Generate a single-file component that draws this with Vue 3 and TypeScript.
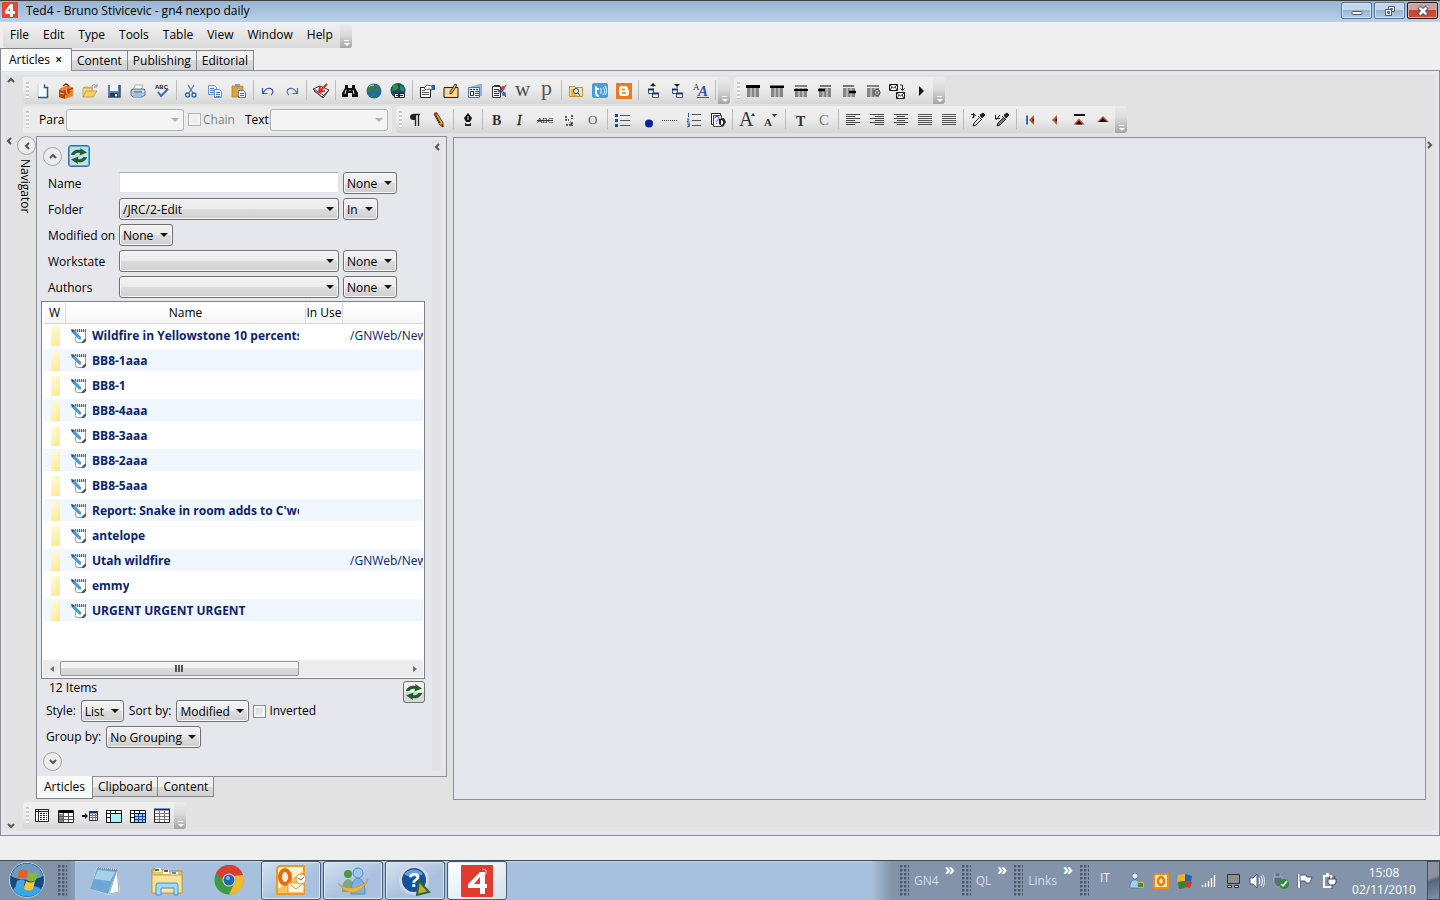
<script setup lang="ts">
import { ref } from 'vue'

interface Tool {
  icon?: string
  label?: string
  sep?: boolean
}

const t = (icon: string, label: string): Tool => ({ icon, label })
const sep: Tool = { sep: true }

const refreshArt =
  '<g fill="#1d5f2a"><path d="M0 7c1-4 5-6 9.500-5L9 0l7 4.500-7.500 3 .500-2.500C6.500 4 4 5.500 3.500 7z"/><path d="M16 9c-1 4-5 6-9.500 5L7 16 0 11.500l7.500-3L7 11c2.500 1 5-.500 5.500-2z"/></g>'

const tableBase =
  '<path d="M2 5h3.500v9H2zM6.500 5h3v9h-3zM10.500 5H14v9h-3.500z" fill="#858585"/>'

const icons: Record<string, string> = {
  newDoc:
    '<path d="M4 1.500h6.500l3 3v10H4z" fill="#f4f8ff"/><path d="M4 1.500v13" stroke="#b9cbe4"/><path d="M10.500 1.500v3h3v10H4" fill="none" stroke="#2f5884" stroke-width="1.500"/>',
  briefcase:
    '<path d="M1 6l9-4 5 3v8l-8 3-6-2z" fill="#e0852a"/><path d="M1 7l6 2v7l-6-2z" fill="#b5481a"/><path d="M7 9l8-4" stroke="#7b2e10"/><path d="M5 3l3-2 3 2" fill="none" stroke="#6c3211" stroke-width="1.500"/><path d="M5 8l6-3 1 5-6 3z" fill="#d23a20"/><path d="M8 6l1 5M2 10l4 1" stroke="#ffd166"/>',
  open:
    '<path d="M1 4l4-1 1 1 5-1v4H1z" fill="#e7b956"/><path d="M1 14V5h9v3z" fill="#f5d98a" stroke="#a9803a" stroke-width=".6"/><path d="M1 14l3-6h11l-4 6z" fill="#f8cf68" stroke="#a9803a" stroke-width=".6"/><path d="M10 3c2-2 3-2 4 0M15 1v3h-3" fill="none" stroke="#7d93b4"/>',
  save:
    '<path d="M2 2h12v12H2z" fill="#5c82ad"/><path d="M4 2h8v6H4z" fill="#eef4fb"/><path d="M4 10h8v4H4z" fill="#2c3c4d"/><path d="M9 11h2v3H9z" fill="#f5f5f5"/><path d="M14 2v12H2" fill="none" stroke="#2e4c70" stroke-width="1.500"/>',
  print:
    '<path d="M5 2h8l-2 5H3z" fill="#fff" stroke="#7f93ad" stroke-width=".7"/><path d="M1 7l3-1h10l1 1v5l-3 2H3l-2-2z" fill="#b7c6da" stroke="#4c6079" stroke-width=".8"/><path d="M4 9h8" stroke="#4f5f74"/><path d="M3 11h9l-1 3H4z" fill="#8fc0ee"/><path d="M12 8h2" stroke="#e9f7e3"/>',
  spell:
    '<text x="1" y="6" font-family="Liberation Sans,sans-serif" font-size="6" font-weight="700" fill="#222">ABC</text><path d="M4 9l3 4 7-7" fill="none" stroke="#2f71b6" stroke-width="2"/>',
  cut:
    '<path d="M5 2l5 8M11 2L6 10" stroke="#5f7d9f" stroke-width="1.300"/><circle cx="4.500" cy="12" r="2" fill="none" stroke="#2d64b3" stroke-width="1.300"/><circle cx="11" cy="12" r="2" fill="none" stroke="#2d64b3" stroke-width="1.300"/>',
  copy:
    '<path d="M1.500 2.500h6l2 2v7h-8z" fill="#e9f2ff" stroke="#6b95cd"/><path d="M3 5.500h4M3 7.500h4M3 9.500h4" stroke="#4279c4"/><path d="M7.500 6.500h5l2 2v6h-7z" fill="#e9f2ff" stroke="#6b95cd"/><path d="M9 9.500h4M9 11.500h4M9 13.500h4" stroke="#4279c4"/>',
  paste:
    '<path d="M1 3h11v11H1z" fill="#e5a23a" stroke="#a36a1d" stroke-width=".6"/><path d="M4 1h5v3H4z" fill="#8e9bab"/><path d="M7.500 7.500h5l2 2v5h-7z" fill="#eef5ff" stroke="#5c80b5"/><path d="M9 10.500h4M9 12.500h4" stroke="#4a6fae"/>',
  undo: '<path d="M2.500 10.500V5M2 10.500h5.500M3 10c2-4 6-6 9-3.500 1.500 1.500 1 4-1 5.500" fill="none" stroke="#3759a8" stroke-width="1.200"/>',
  redo: '<path d="M13.500 10.500V5M14 10.500H8.500M13 10c-2-4-6-6-9-3.500-1.500 1.500-1 4 1 5.500" fill="none" stroke="#4c70b8" stroke-width="1.200"/>',
  checkin:
    '<path d="M0 6l7-3 9 4-6 8z" fill="#fff" stroke="#222" stroke-width=".9"/><path d="M1 8l8 6 6-6M1 6l9 6" fill="none" stroke="#444"/><path d="M14 1L7 8M7 3l-1 6 6-1" stroke="#d92b20" stroke-width="2" fill="none"/>',
  find:
    '<path d="M3 2h3v3h4V2h3v3l3 5v4h-6v-4H6v4H0v-4l3-5z" fill="#111"/><path d="M3 11l1-4M12 11l-1-4M8 7v1" stroke="#e8e8e8"/>',
  globe:
    '<circle cx="8" cy="8" r="7.500" fill="#2566ad"/><path d="M2 4c3-3 6-2 6 0S5 6 5 8 3 9 1.500 8zM9 2l4 1 1.500 5-3 1-2-2zM6 10l4 1-2 4-3-2z" fill="#357f36"/><path d="M3 4c2-2 4-2 5-2" stroke="#c7e4f8" fill="none"/>',
  globeLink:
    '<circle cx="8" cy="7.500" r="7.500" fill="#174a73"/><path d="M3 2c4-2 6 0 5 3S3 7 2 8zM10 2l4 3v4l-4-2z" fill="#2f9438"/><path d="M4.500 10.500h4v4h-4zM9.500 10.500h5v4h-5z" fill="#eee" stroke="#222"/><path d="M6 12.500h7" stroke="#222"/>',
  props:
    '<path d="M1.500 4.500h10v10h-10z" fill="#fff" stroke="#222"/><path d="M3 7.500h3M3 9.500h7M3 11.500h7" stroke="#555"/><path d="M5 5l3-3 5 1v4l-3-1-3 1z" fill="#f3f3f3" stroke="#222" stroke-width=".7"/><path d="M13 2h3v5h-3z" fill="#3a5ea8"/>',
  editCard:
    '<path d="M1 4.500h14v10H1z" fill="#f6d38b" stroke="#222"/><path d="M3 7.500h4M3 9.500h3M3 12.500h9M12 9.500h2" stroke="#fff" stroke-dasharray="1 1"/><path d="M7 9l5-8 2 1-5 8-2 1z" fill="#f5a623" stroke="#222" stroke-width=".8"/>',
  news:
    '<path d="M3 4l9-3h3v12H3z" fill="#8eb5df"/><path d="M1.500 4.500h11v10h-11z" fill="#e8f1fb" stroke="#4473ad"/><path d="M3 6.500h8" stroke="#222" stroke-dasharray="2 1"/><path d="M3.500 8.500h3v4h-3z" fill="#fff" stroke="#222"/><path d="M8 8.500h4M8 10.500h4M8 12.500h4" stroke="#28508b"/>',
  docMix:
    '<path d="M1.500 3.500h8v11h-8z" fill="#fff" stroke="#333"/><path d="M3 6.500h5M3 8.500h3M3 10.500h5M3 12.500h5M3 2.500h5" stroke="#333"/><path d="M8 2l7 12M15 2l-6 9" stroke="#333"/><circle cx="12" cy="5" r="2" fill="#d33"/><circle cx="13" cy="11" r="2" fill="#4065c4"/><circle cx="8" cy="8" r="1.500" fill="#4065c4"/>',
  w: '<text x="0" y="13" font-family="Liberation Serif,serif" font-size="21" fill="#4d4d4d">w</text>',
  p: '<text x="2" y="12" font-family="Liberation Serif,serif" font-size="22" fill="#555">p</text>',
  folderFind:
    '<path d="M1.500 3.500h5l1 1h7v9h-13z" fill="#fbe3a7" stroke="#c09036"/><path d="M3 6h8v7H3z" fill="#f5b32b"/><path d="M9 7h5v6H9z" fill="#dbe9f7"/><circle cx="8" cy="8" r="2.500" fill="#eaf5ff" stroke="#345"/><path d="M10 10l2 3" stroke="#345"/>',
  twit:
    '<rect width="16" height="15" rx="2" fill="#44a0dc"/><path d="M4 3v7c0 2 1 3 3 3M4 6h3" fill="none" stroke="#fff" stroke-width="2"/><path d="M9 5v6M11 4c2 2 2 5 0 8M13 3c2 3 2 6 0 9" stroke="#e9f6ff" fill="none"/>',
  blogger:
    '<rect width="16" height="16" fill="#ee7a1d"/><path d="M6 3h3c2 0 3 1 3 3 0 1 1 1 1 2v2c0 2-1 3-3 3H6c-2 0-3-1-3-3V6c0-2 1-3 3-3z" fill="#fff"/><path d="M6 6.500h3M6 10h4" stroke="#ee7a1d" stroke-width="1.500"/>',
  winUp:
    '<path d="M5 3l3-3 3 3z" fill="#111"/><path d="M8 3v4" stroke="#444" stroke-dasharray="1 1"/><path d="M3.500 6.500h5v4h-5zM7.500 10.500h6v4h-6z" fill="#fff" stroke="#35579d"/><path d="M3 6.500h6M7 10.500h7" stroke="#1d3470" stroke-width="2"/>',
  winDown:
    '<path d="M5 1h6L8 4z" fill="#111"/><path d="M8 4v3" stroke="#444" stroke-dasharray="1 1"/><path d="M3.500 6.500h5v4h-5zM7.500 10.500h6v4h-6z" fill="#fff" stroke="#35579d"/><path d="M3 6.500h6M7 10.500h7" stroke="#1d3470" stroke-width="2"/>',
  aA: '<text x="0" y="7" font-family="Liberation Serif,serif" font-size="9" fill="#333">A</text><text x="5" y="13" font-family="Liberation Serif,serif" font-size="15" font-style="italic" font-weight="700" fill="#35579d">A</text><path d="M4 14.500h12" stroke="#35579d"/>',
  tb1: tableBase + '<path d="M1 2h14v3H1z" fill="#000"/>',
  tb2: tableBase + '<path d="M1 3h14" stroke="#777" stroke-width="2"/><path d="M1 4h14" stroke="#000" stroke-width="2"/>',
  tb3: tableBase + '<path d="M2 3h12" stroke="#858585" stroke-width="2"/><path d="M1 7h14" stroke="#000" stroke-width="2"/>',
  tb4: tableBase + '<path d="M3 3h11" stroke="#777" stroke-width="2"/><path d="M1 7h7" stroke="#000" stroke-width="2.500"/>',
  tb5: tableBase + '<path d="M2 3h11" stroke="#777" stroke-width="2"/><path d="M8 9h7" stroke="#000" stroke-width="2.500"/>',
  tb6: tableBase + '<path d="M2 3h12" stroke="#858585" stroke-width="2"/><circle cx="12" cy="9.500" r="3" fill="#eee" stroke="#333"/><path d="M10 7.500l4 4m0-4l-4 4" stroke="#333"/>',
  mail:
    '<path d="M.500 1.500h8v6h-8zM7.500 9.500h8v6h-8z" fill="#fff" stroke="#111"/><path d="M1 2l3.500 3L8 2M1 7l2-3M8 7L6 4M8 10l3.500 3 3.500-3M8 15l2-3M15 15l-2-3M11 2h2.500v5M11.500 5.500l2 2 2-2" fill="none" stroke="#111" stroke-width=".9"/>',
  play: '<path d="M6 3l5 5-5 5z" fill="#111"/>',
  pilcrow: '<path d="M6 2.500h7M8.500 2v12M11.500 2v12" stroke="#222" stroke-width="1.300"/><path d="M8 2H6c-4 0-4 6 0 6h2z" fill="#222"/>',
  pencil: '<path d="M3 2l3-1 6 10v4l-3-2z" fill="#eea12d" stroke="#5a3a10"/><path d="M4 2l5 9M11 12l1 3" stroke="#222"/><path d="M3 2l3-1" stroke="#a03a2a" stroke-width="2"/>',
  pen: '<path d="M8 1l4 5-2 4H6L4 6z" fill="#111"/><path d="M8 4v4" stroke="#eee"/><path d="M5 11h6v3H5z" fill="#222"/><path d="M6 11.500h4" stroke="#eee"/>',
  bold: '<text x="3" y="13" font-family="Liberation Serif,serif" font-size="14" font-weight="700" fill="#333">B</text>',
  italic: '<text x="4" y="13" font-family="Liberation Serif,serif" font-size="14" font-style="italic" fill="#222" stroke="#222" stroke-width=".3">I</text>',
  strike: '<text x="0" y="11" font-family="Liberation Sans,sans-serif" font-size="8" fill="#333">ABC</text><path d="M0 8.500h16" stroke="#333"/>',
  hyph: '<path d="M5 4v4h3M11 3v4M5 13h6l-2-3M11 10v4" fill="none" stroke="#333" stroke-width="1.500" stroke-dasharray="2 1"/>',
  circ: '<text x="3" y="12" font-family="Liberation Serif,serif" font-size="13" fill="#666">O</text>',
  bullets: '<path d="M1 2h3v3H1zM1 7h3v3H1zM1 12h3v3H1z" fill="#2441a0"/><path d="M6 3.500h10M6 8.500h10M6 13.500h10" stroke="#555"/>',
  dot: '<circle cx="11" cy="11.500" r="4" fill="#0d2496"/>',
  dotted: '<path d="M0 8.500h16" stroke="#444" stroke-dasharray="1 1"/>',
  numbers: '<path d="M2.500 1v4M1 7h2l-2 3h3M1 12h3l-2 1 2 1-3 1" stroke="#35579d" fill="none"/><path d="M6 2.500h9M6 8.500h9M6 13.500h9" stroke="#555"/>',
  help: '<path d="M1.500 1.500h9v11h-9z" fill="#fff" stroke="#222"/><path d="M3.500 3.500h8v11h-8z" fill="#eef3fa" stroke="#444"/><text x="4" y="12" font-family="Liberation Sans,sans-serif" font-size="10" fill="#35579d">?</text><path d="M9 7l5-1 2 4-3 5-4-3z" fill="#222"/><path d="M11 8l2 1v3l-2 1z" fill="#fff"/>',
  bigA: '<text x="0" y="14" font-family="Liberation Serif,serif" font-size="20" fill="#333">A</text><path d="M12 4l2-3 2 3z" fill="#333"/>',
  smallA: '<text x="1" y="14" font-family="Liberation Serif,serif" font-size="11" font-weight="700" fill="#333">A</text><path d="M9 2h5l-2.500 3z" fill="#333"/>',
  typeT: '<path d="M2 3.500h6M3 5.500h6" stroke="#d3d3d3"/><text x="4" y="14" font-family="Liberation Serif,serif" font-size="14" font-weight="700" fill="#333">T</text>',
  typeC: '<text x="3" y="13" font-family="Liberation Serif,serif" font-size="15" fill="#7a7a7a">C</text>',
  alignL: '<path d="M1 2.500h14M1 4.500h9M1 6.500h14M1 8.500h9M1 10.500h14M1 12.500h9" stroke="#444"/>',
  alignR: '<path d="M1 2.500h14M6 4.500h9M1 6.500h14M6 8.500h9M1 10.500h14M6 12.500h9" stroke="#444"/>',
  alignC: '<path d="M1 2.500h14M4 4.500h8M1 6.500h14M4 8.500h8M1 10.500h14M4 12.500h8" stroke="#444"/>',
  alignJ: '<path d="M1 2.500h14M1 4.500h14M1 6.500h14M1 8.500h14M1 10.500h14M1 12.500h14" stroke="#555"/>',
  dropper1: '<path d="M1 2.500h4M3.500 1v5M6 3L2 6" stroke="#222"/><path d="M10 3l3-2 2 2-3 3z" fill="#222" stroke="#222"/><path d="M8 4l4 4M10 5l-6 6-1 3 3-1 6-6" fill="none" stroke="#222"/>',
  dropper2: '<path d="M1 6.500h5M2 8l4-5M1.500 3v4" stroke="#222"/><path d="M10 3l3-2 2 2-3 3z" fill="#222" stroke="#222"/><path d="M8 4l4 4M10 5l-6 6-1 3 3-1 6-6" fill="#777" stroke="#222"/>',
  first: '<path d="M4 3.500v9" stroke="#3b66b0" stroke-width="2"/><path d="M11 3v10L6 8z" fill="#c4532f"/><path d="M11 6v4L9 8z" fill="#111"/>',
  prev: '<path d="M10 3v10L5 8z" fill="#c4532f"/><path d="M10 6v4L8 8z" fill="#111"/>',
  top: '<path d="M3 3h11" stroke="#111" stroke-width="2"/><path d="M2.500 12.500L8 6.500l5.500 6z" fill="#c4532f"/><path d="M4.500 12.500L8 8.500l3.500 4z" fill="#111"/>',
  up: '<path d="M2 10l6-6 6 6z" fill="#c4532f"/><path d="M4 10l4-4 4 4z" fill="#111"/>',
  gridA: '<path d="M1.500 1.500h13v12h-13z" fill="#fff" stroke="#222"/><path d="M1.500 3.500h13M4.500 1.500v12" stroke="#222"/><path d="M6 5.500h7M6 7.500h7M6 9.500h7M6 11.500h7" stroke="#222" stroke-dasharray="2 1"/>',
  gridB: '<path d="M.500 2.500h15v12H.500z" fill="#fff" stroke="#222"/><path d="M1 2h14v3H1z" fill="#000"/><path d="M1 6h4v8H1z" fill="#888"/><path d="M5.500 5v9M10.500 5v9M1 8.500h14M1 11.500h14" stroke="#555"/>',
  gridC: '<path d="M0 8h5" stroke="#111" stroke-width="2"/><path d="M3 5l3 3-3 3z" fill="#111"/><path d="M7.500 3.500h8v9h-8z" fill="#fff" stroke="#1d2f7a"/><path d="M7 4.500h9" stroke="#1d2f7a" stroke-width="2"/><path d="M8 7.500h7M8 9.500h7M10.500 6v6M13.500 6v6" stroke="#777"/>',
  gridD: '<path d="M.500 2.500h15v12H.500z" fill="#a8f1f5" stroke="#111"/><path d="M1 3h14v2H1zM1 6h3v8H1z" fill="#fff"/><path d="M.500 5.500h15M4.500 2.500v12M9.500 3v2M1 9.500h3" stroke="#111"/>',
  gridE: '<path d="M.500 2.500h15v12H.500z" fill="#7edff0" stroke="#111"/><path d="M1 3h14v2H1zM1 6h3v8H1z" fill="#fff"/><path d="M.500 5.500h15M4.500 2.500v12M9.500 3v2M1 9.500h3" stroke="#111"/><path d="M5 8.500h10M5 11.500h10M8.500 6v8M12.500 6v8" stroke="#1d3fae"/>',
  gridF: '<path d="M.500 1.500h15v13H.500z" fill="#fff" stroke="#222"/><path d="M0 1.500h16" stroke="#1d2f7a" stroke-width="2"/><path d="M1 5.500h14M1 8.500h14M1 11.500h14M5.500 3v11M10.500 3v11" stroke="#777"/>',
}

const mainBar: Tool[] = [
  t('newDoc', 'New'), t('briefcase', 'Case'), t('open', 'Open'), t('save', 'Save'), t('print', 'Print'), t('spell', 'Spelling'), sep,
  t('cut', 'Cut'), t('copy', 'Copy'), t('paste', 'Paste'), sep, t('undo', 'Undo'), t('redo', 'Redo'), sep, t('checkin', 'Check in'), sep,
  t('find', 'Find'), t('globe', 'Web'), t('globeLink', 'Web link'), sep,
  t('props', 'Properties'), t('editCard', 'Edit card'), t('news', 'News'), t('docMix', 'Structure'), t('w', 'Words'), t('p', 'Paragraphs'), sep,
  t('folderFind', 'Browse'), t('twit', 'Twitter'), t('blogger', 'Blogger'), sep,
  t('winUp', 'Raise'), t('winDown', 'Lower'), t('aA', 'Case change'), sep,
]
const columnBar: Tool[] = [
  t('tb1', 'Column 1'), t('tb2', 'Column 2'), t('tb3', 'Column 3'), t('tb4', 'Column 4'), t('tb5', 'Column 5'), t('tb6', 'Remove column'), t('mail', 'Swap'), t('play', 'Play'),
]
const formatBar: Tool[] = [
  t('pilcrow', 'Show marks'), t('pencil', 'Pencil'), sep, t('pen', 'Pen'), sep,
  t('bold', 'Bold'), t('italic', 'Italic'), t('strike', 'Strike'), t('hyph', 'Hyphen'), t('circ', 'Outline'), sep,
  t('bullets', 'Bullets'), t('dot', 'Dot'), t('dotted', 'Leader'), t('numbers', 'Numbering'), t('help', 'Symbol'), sep,
  t('bigA', 'Grow'), t('smallA', 'Shrink'), sep, t('typeT', 'Type'), t('typeC', 'Character'), sep,
  t('alignL', 'Left'), t('alignR', 'Right'), t('alignC', 'Centre'), t('alignJ', 'Justify'), t('alignJ', 'Force justify'), sep,
  t('dropper1', 'Pick style'), t('dropper2', 'Apply style'), sep,
  t('first', 'First'), t('prev', 'Previous'), t('top', 'Top'), t('up', 'Up'),
]
const gridBar: Tool[] = [
  t('gridA', 'Grid'), t('gridB', 'Table'), t('gridC', 'Insert table'), t('gridD', 'Select body'), t('gridE', 'Select cells'), t('gridF', 'Table lines'),
]

const menus = ['File', 'Edit', 'Type', 'Tools', 'Table', 'View', 'Window', 'Help']
const pages = ['Content', 'Publishing', 'Editorial']

const filters = [
  { id: 'name', label: 'Name', kind: 'text', value: '', op: 'None' },
  { id: 'folder', label: 'Folder', kind: 'select', value: '/JRC/2-Edit', op: 'In' },
  { id: 'modified', label: 'Modified on', kind: 'none', value: '', op: 'None' },
  { id: 'workstate', label: 'Workstate', kind: 'select', value: '', op: 'None' },
  { id: 'authors', label: 'Authors', kind: 'select', value: '', op: 'None' },
]

const rows = [
  { name: 'Wildfire in Yellowstone 10 percents c', path: '/GNWeb/New' },
  { name: 'BB8-1aaa', path: '' },
  { name: 'BB8-1', path: '' },
  { name: 'BB8-4aaa', path: '' },
  { name: 'BB8-3aaa', path: '' },
  { name: 'BB8-2aaa', path: '' },
  { name: 'BB8-5aaa', path: '' },
  { name: "Report: Snake in room adds to C'wea", path: '' },
  { name: 'antelope', path: '' },
  { name: 'Utah wildfire', path: '/GNWeb/New' },
  { name: 'emmy', path: '' },
  { name: 'URGENT URGENT URGENT', path: '' },
]

const search = ref('')
const inverted = ref(false)

const apps = [
  { label: 'Notepad', state: '', art: '<path d="M8 2l20 2 3 23-11 3L1 24z" fill="#dcecf7"/><path d="M8 3l20 2-9 24L1 24z" fill="#6ea8d2"/><path d="M9 5l17 2-5 9L5 14z" fill="#a9d0ea"/><path d="M28 5l2 22-10 2z" fill="#f6f8fa" stroke="#8c99a8" stroke-width=".7"/><path d="M9 3l19 2" stroke="#7b8793" stroke-width="2" stroke-dasharray="1 1"/>' },
  { label: 'Explorer', state: '', art: '<path d="M1 4h10l1 2h19v22H1z" fill="#e7c56a" stroke="#b48f3c"/><path d="M4 3h6v4H4zM12 5h6v4h-6zM20 7h7v3h-7z" fill="#fff"/><path d="M4 5h4" stroke="#2b8a3e" stroke-width="2"/><path d="M13 6h4" stroke="#c33" stroke-width="2"/><path d="M21 8h4" stroke="#28a0d8" stroke-width="2"/><path d="M1 10h30v18H1z" fill="#f9e39a" stroke="#c6a24a"/><path d="M5 30V20q0-2 2-2h18q2 0 2 2v10h-4v-7H10v7z" fill="#a5d8f3" stroke="#4a94c6"/>' },
  { label: 'Chrome', state: '', art: '<circle cx="16" cy="15" r="14.500" fill="#3f9a48"/><path d="M3 8A14.500 14.500 0 0 1 30 10H16a6 6 0 0 0-6 5z" fill="#d93e31"/><path d="M30 10a14.500 14.500 0 0 1-14 19.500L21 19a6 6 0 0 0 0-8z" fill="#f2b92a"/><circle cx="16" cy="15" r="6.500" fill="#ddd"/><circle cx="16" cy="15" r="5.500" fill="#2468ac"/><circle cx="15" cy="13" r="2" fill="#7eb8e6"/>' },
  { label: 'Outlook', state: 'open', art: '<path d="M2 5q0-4 4-4h23v28H2z" fill="#fff3cf" stroke="#ee9a1a" stroke-width="2"/><path d="M3 24L28 6v22H3z" fill="#f7c55c"/><ellipse cx="10" cy="12" rx="5" ry="7" fill="none" stroke="#e56b18" stroke-width="4"/><path d="M13 18h16v10H13z" fill="#fff6df" stroke="#e39e35"/><path d="M13 18l8 6 8-6" fill="none" stroke="#e39e35"/><circle cx="26" cy="14" r="5" fill="#fffaf0" stroke="#de9430"/><path d="M23 13l3 2 3-3" fill="none" stroke="#777"/>' },
  { label: 'Messenger', state: 'open', art: '<circle cx="11" cy="9" r="4" fill="#4f9444"/><path d="M5 27c-1-17 13-17 13 0z" fill="#82a883"/><circle cx="21" cy="8" r="5" fill="#9cc8ee" stroke="#5a8dc0"/><path d="M14 29c-1-21 15-21 14 0z" fill="#80b1e0" stroke="#5a8dc0"/><path d="M1 18c7 8 24 6 30-4-6 15-20 19-30 4z" fill="#e7b93d" stroke="#c28e20" stroke-width=".6"/>' },
  { label: 'Help', state: 'open', art: '<circle cx="15" cy="15" r="13.500" fill="#174f9c" stroke="#cfd8e2" stroke-width="3"/><path d="M5 9c5-6 15-6 19 0-4 3-15 4-19 0z" fill="#649fd8"/><text x="9" y="22" font-family="Liberation Sans,sans-serif" font-size="20" font-weight="700" fill="#fff">?</text><path d="M18 30l2-14 10 11z" fill="#c9a83c" stroke="#276f30" stroke-width="2"/>' },
  { label: 'Ted4', state: 'open active', art: '<rect width="32" height="32" rx="1" fill="#e03c2d"/><path d="M19 7L7 19v4h12v6h5v-6h2v-4h-2V7zM19 19h-6l6-7z" fill="#fff" fill-rule="evenodd"/><path d="M21 4l4 1v4l-3 2" fill="none" stroke="#f4c9b9"/>' },
]

const tray = [
  { label: 'User', art: '<circle cx="6" cy="3" r="3" fill="#d8ecfa" stroke="#3a78a8" stroke-width=".7"/><path d="M1 15c-1-11 11-11 10 0z" fill="#a5cdea" stroke="#3a78a8" stroke-width=".7"/><path d="M8.500 9.500h6v5h-6z" fill="#4c8b31" stroke="#d9b63a"/>' },
  { label: 'Outlook', art: '<path d="M1 1h14v14H1z" fill="#ffe7b3" stroke="#ee8c14" stroke-width="2"/><ellipse cx="8" cy="8" rx="3" ry="4" fill="none" stroke="#e8790c" stroke-width="2.500"/>' },
  { label: 'Antivirus', art: '<path d="M1 2l7-1v7L0 9z" fill="#e9b52a"/><path d="M8 1l7 2-1 6-6-1z" fill="#2b5daf"/><path d="M1 9l7-1v7l-6 1z" fill="#2e8536"/><path d="M8 8l7 1-2 6-5-1z" fill="#d13a2a"/>' },
  { label: 'Network', art: '<path d="M1.500 14v-2M4.500 14v-4M7.500 14V8M10.500 14V5M13.500 14V2" stroke="#3c4b60" stroke-width="3"/><path d="M1.500 14v-2M4.500 14v-4M7.500 14V8M10.500 14V5M13.500 14V2" stroke="#fff" stroke-width="2"/>' },
  { label: 'Display', art: '<path d="M2.500 1.500h12v9h-12z" fill="#8f8f8f" stroke="#333"/><path d="M2.500 12.500h4v2h-4zM9.500 12.500h4v2h-4z" fill="#ddd" stroke="#333"/>' },
  { label: 'Volume', art: '<path d="M1 5h3l4-4v14l-4-4H1z" fill="#fff" stroke="#3c4a5d" stroke-width=".9"/><path d="M10 5c1 2 1 4 0 6M12 3c2 3 2 7 0 10" fill="none" stroke="#fff"/><path d="M14 2c2 4 2 8 0 12" fill="none" stroke="#dfe5ec"/>' },
  { label: 'Safely remove', art: '<path d="M2 0h5v4H2zM1 4h8v6l-3 4H4l-3-4z" fill="#626d79" stroke="#bcc6d1" stroke-width=".6"/><circle cx="11" cy="11" r="5" fill="#2f8a42"/><path d="M8 11l2 2 4-5" fill="none" stroke="#fff" stroke-width="1.500"/>' },
  { label: 'Action centre', art: '<path d="M2 1v14" stroke="#3c4a5d" stroke-width="3"/><path d="M2 1v14" stroke="#fff" stroke-width="2"/><path d="M3 2h6l1 2h5l-2 6H9L8 8H3z" fill="#fff" stroke="#3c4a5d" stroke-width=".9"/>' },
  { label: 'Power', art: '<path d="M3 3h7v11H3z" fill="none" stroke="#fff" stroke-width="2"/><path d="M5 0h3v2H5z" fill="#fff"/><path d="M8.500 3v3M13.500 3v3M7 6h8v4l-2 2H9l-2-2zM11 12v4" fill="#fff" stroke="#3c4a5d"/>' },
]

const links = ['GN4', 'QL', 'Links']
</script>

<template>
  <div class="window">
    <header class="titlebar">
      <svg class="logo" viewBox="0 0 16 16"><rect width="16" height="16" rx="1" fill="#e4472b" /><path d="M8 2L3 9v3h5v3h3v-3h2V9h-2V2zM8 9H6l2-3z" fill="#fff" fill-rule="evenodd" /></svg>
      <h1 class="title">Ted4 - Bruno Stivicevic - gn4 nexpo daily</h1>
      <button class="wbtn" aria-label="Minimize"><svg viewBox="0 0 14 12"><rect x="2" y="6.500" width="10" height="3" rx="1" fill="#fff" stroke="#4b5a6d" /></svg></button>
      <button class="wbtn" aria-label="Restore"><svg viewBox="0 0 14 12"><path d="M5.500 1.500h6v5h-6zM7.500 3.500v1h2v-1z" fill="#fff" stroke="#4b5a6d" fill-rule="evenodd" /><path d="M2.500 4.500h6v6h-6zM4.500 6.500v2h2v-2z" fill="#fff" stroke="#4b5a6d" fill-rule="evenodd" /></svg></button>
      <button class="wbtn close" aria-label="Close"><svg viewBox="0 0 14 12"><path d="M3 2l8 8M11 2l-8 8" stroke="#454a5c" stroke-width="4.500" /><path d="M3.500 2.500l7 7M10.500 2.500l-7 7" stroke="#fff" stroke-width="2.500" /></svg></button>
    </header>

    <nav class="menubar">
      <div class="menus">
        <button v-for="m in menus" :key="m" class="menu">{{ m }}</button>
        <span class="overflow"></span>
      </div>
    </nav>

    <div class="tabs">
      <button class="tab active">Articles <span class="x">×</span></button>
      <button v-for="p in pages" :key="p" class="tab">{{ p }}</button>
    </div>

    <main class="frame">
      <div class="inner">
        <div class="gutter">
          <button class="chev g-up" aria-label="Hide toolbars"><svg viewBox="0 0 8 8"><path d="M1 6l3-3 3 3" /></svg></button>
          <button class="chev g-left" aria-label="Hide navigator"><svg viewBox="0 0 8 8"><path d="M6 1L3 4l3 3" /></svg></button>
          <button class="chev g-down" aria-label="Hide table bar"><svg viewBox="0 0 8 8"><path d="M1 2l3 3 3-3" /></svg></button>
        </div>

        <div class="center">
          <div class="barrow">
            <div class="toolbar">
              <span class="grip"></span>
              <template v-for="(b, i) in mainBar" :key="i">
                <span v-if="b.sep" class="sep"></span>
                <button v-else class="tool" :aria-label="b.label"><svg viewBox="0 0 16 16" v-html="icons[b.icon!]"></svg></button>
              </template>
              <span class="overflow"></span>
            </div>
            <div class="toolbar">
              <span class="grip"></span>
              <button v-for="b in columnBar" :key="b.label" class="tool" :aria-label="b.label"><svg viewBox="0 0 16 16" v-html="icons[b.icon!]"></svg></button>
              <span class="overflow"></span>
            </div>
          </div>

          <div class="barrow">
            <div class="toolbar styles">
              <span class="grip"></span>
              <label class="slabel" for="para">Para</label>
              <span class="combo off"><select id="para" disabled><option></option></select></span>
              <label class="check dim"><input type="checkbox" disabled />Chain</label>
              <label class="slabel textlabel" for="text">Text</label>
              <span class="combo off"><select id="text" disabled><option></option></select></span>
            </div>
            <div class="toolbar">
              <span class="grip"></span>
              <template v-for="(b, i) in formatBar" :key="i">
                <span v-if="b.sep" class="sep"></span>
                <button v-else class="tool" :aria-label="b.label"><svg viewBox="0 0 16 16" v-html="icons[b.icon!]"></svg></button>
              </template>
              <span class="overflow"></span>
            </div>
          </div>

          <div class="body">
            <div class="navstrip">
              <button class="round" aria-label="Collapse navigator"><svg viewBox="0 0 8 8"><path d="M6 1L3 4l3 3" /></svg></button>
              <span class="vtext">Navigator</span>
            </div>

            <div class="side">
              <section class="panel">
                <div class="content">
                  <div class="head">
                    <button class="round" aria-label="Collapse filters"><svg viewBox="0 0 8 8"><path d="M1 6l3-3 3 3" /></svg></button>
                    <button class="refresh focus" aria-label="Refresh"><svg viewBox="0 0 16 16" v-html="refreshArt"></svg></button>
                  </div>

                  <form class="filters" @submit.prevent>
                    <div v-for="f in filters" :key="f.id" class="filter">
                      <label class="flabel" :for="f.id">{{ f.label }}</label>
                      <input v-if="f.kind === 'text'" :id="f.id" v-model="search" class="field" type="text" />
                      <span v-else-if="f.kind === 'select'" class="combo wide"><select :id="f.id"><option>{{ f.value }}</option></select></span>
                      <span class="combo" :class="f.op === 'In' ? 'tiny' : 'op'"><select :id="f.kind === 'none' ? f.id : f.id + '-op'" :aria-label="f.label + ' condition'"><option>{{ f.op }}</option></select></span>
                    </div>
                  </form>

                  <div class="list">
                    <div class="viewport">
                      <table>
                        <colgroup><col class="c-w" /><col class="c-name" /><col class="c-use" /><col class="c-path" /></colgroup>
                        <thead><tr><th>W</th><th>Name</th><th>In Use</th><th></th></tr></thead>
                        <tbody>
                          <tr v-for="r in rows" :key="r.name">
                            <td><span class="swatch"></span></td>
                            <td>
                              <span class="item">
                                <svg class="doc" viewBox="0 0 16 16"><path d="M4.500 3v9.500q0 2 2 2h4l4-4V3z" fill="#fff" stroke="#9a9a9a" /><path d="M4 2.500h11" stroke="#666" stroke-width="3" stroke-dasharray="1 1" /><path d="M10 15l5-5v3l-2 2z" fill="#555" /><path d="M0 2l4 1 7 7v3l-3-1-7-7z" fill="#fff" /><path d="M2 3l2 0 6 6v2.500H8L2 5.500z" fill="#4f97d0" /><path d="M0 1l4 1-3 3z" fill="#1e4e8c" /></svg>
                                <span class="name">{{ r.name }}</span>
                              </span>
                            </td>
                            <td></td>
                            <td class="path">{{ r.path }}</td>
                          </tr>
                        </tbody>
                      </table>
                    </div>
                    <div class="scroll">
                      <button class="arrow" aria-label="Scroll left"><svg viewBox="0 0 6 8"><path d="M5 1v6L1 4z" /></svg></button>
                      <span class="track"><span class="thumb"><i></i><i></i><i></i></span></span>
                      <button class="arrow" aria-label="Scroll right"><svg viewBox="0 0 6 8"><path d="M1 1v6l4-3z" /></svg></button>
                    </div>
                  </div>

                  <div class="foot">
                    <div class="footmain">
                      <p class="count">12 Items</p>
                      <div class="opts">
                        <label for="style">Style:</label>
                        <span class="combo w-list"><select id="style"><option>List</option></select></span>
                        <label for="sort">Sort by:</label>
                        <span class="combo w-mod"><select id="sort"><option>Modified</option></select></span>
                        <label class="check"><input v-model="inverted" type="checkbox" />Inverted</label>
                      </div>
                      <div class="opts">
                        <label for="group">Group by:</label>
                        <span class="combo w-group"><select id="group"><option>No Grouping</option></select></span>
                      </div>
                      <button class="round" aria-label="Expand options"><svg viewBox="0 0 8 8"><path d="M1 2l3 3 3-3" /></svg></button>
                    </div>
                    <button class="refresh" aria-label="Refresh list"><svg viewBox="0 0 16 16" v-html="refreshArt"></svg></button>
                  </div>
                </div>
                <div class="rail">
                  <button class="chev" aria-label="Collapse panel"><svg viewBox="0 0 8 8"><path d="M6 1L3 4l3 3" /></svg></button>
                </div>
              </section>
              <div class="ptabs">
                <button class="tab active">Articles</button>
                <button class="tab">Clipboard</button>
                <button class="tab">Content</button>
              </div>
            </div>

            <section class="canvas"></section>
            <div class="rgutter"><button class="chev" aria-label="Show right panel"><svg viewBox="0 0 8 8"><path d="M2 1l3 3-3 3" /></svg></button></div>
          </div>

          <div class="barrow last">
            <div class="toolbar">
              <span class="grip"></span>
              <button v-for="b in gridBar" :key="b.label" class="tool" :aria-label="b.label"><svg viewBox="0 0 16 16" v-html="icons[b.icon!]"></svg></button>
              <span class="overflow"></span>
            </div>
          </div>
        </div>
      </div>
    </main>

    <div class="status"></div>

    <footer class="taskbar">
      <div class="startzone">
        <button class="orb" aria-label="Start">
          <svg viewBox="0 0 38 38"><circle cx="19" cy="19" r="17.500" fill="#164a80" stroke="#b9d2ea" /><path d="M3 15a16.500 16.500 0 0 1 32 0c-8 5-24 5-32 0z" fill="#7398bd" /><path d="M5 28c7-5 21-5 28 0-6 10-22 10-28 0z" fill="#35a9e4" /><path d="M11 10c3-2 6-2 9 0l-2 8c-3-2-6-2-9 0z" fill="#ea5f23" /><path d="M21 11c3 2 6 2 9 0l-2 8c-3 2-6 2-9 0z" fill="#86b93a" /><path d="M9 20c3-2 5-2 8 0l-2 8c-3-2-5-2-8 0z" fill="#4ba3e0" /><path d="M18 20c3 2 6 2 9 0l-2 8c-3 2-6 2-9 0z" fill="#f8c535" /></svg>
        </button>
        <span class="dots"></span>
      </div>
      <div class="apps">
        <button v-for="a in apps" :key="a.label" class="app" :class="a.state" :aria-label="a.label"><svg viewBox="0 0 32 32" v-html="a.art"></svg></button>
      </div>
      <div class="trayzone">
        <template v-for="l in links" :key="l">
          <span class="dots"></span>
          <button class="link">{{ l }}</button>
          <span class="more">»</span>
        </template>
        <span class="dots"></span>
        <span class="lang">IT</span>
        <div class="tray">
          <button v-for="s in tray" :key="s.label" class="trayicon" :aria-label="s.label"><svg viewBox="0 0 16 16" v-html="s.art"></svg></button>
        </div>
        <div class="clock"><span>15:08</span><span>02/11/2010</span></div>
        <button class="desktop" aria-label="Show desktop"></button>
      </div>
    </footer>
  </div>
</template>

<style>
body {
  margin: 0;
  background: #efefef;
}
</style>

<style scoped>
* {
  box-sizing: border-box;
}
.window {
  display: flex;
  flex-direction: column;
  min-height: 100vh;
  background: #efefef;
  color: #000;
  font: 12px/16px 'Open Sans', 'Noto Sans', sans-serif;
}
button,
input,
select {
  margin: 0;
  padding: 0;
  border: 0;
  background: none;
  color: inherit;
  font: inherit;
}
button svg {
  display: block;
}

.titlebar {
  display: flex;
  align-items: flex-start;
  height: 22px;
  padding: 1px 2px 0;
  border-top: 1px solid #3c3c3c;
  background: linear-gradient(#98b4d2, #b9d1ea);
}
.logo {
  width: 16px;
  height: 16px;
}
.title {
  flex: 1;
  margin: 0 0 0 8px;
  font-size: 12px;
  font-weight: 400;
  line-height: 18px;
}
.wbtn {
  display: flex;
  align-items: center;
  justify-content: center;
  width: 31px;
  height: 17px;
  margin-left: 2px;
  border: 1px solid #5a7498;
  border-radius: 2px;
  box-shadow: inset 0 0 0 1px #d3e2f3;
  background: linear-gradient(#c3d6eb 50%, #98b3d2 50%, #b4cce6);
}
.wbtn svg {
  width: 14px;
  height: 12px;
}
.wbtn.close {
  border-color: #37161a;
  box-shadow: inset 0 0 0 1px #d9a9a0;
  background: linear-gradient(#c5a5a0 45%, #d0402b 45%, #c4533a);
}

.menubar {
  height: 26px;
  padding: 2px 3px 0;
}
.menus {
  display: inline-flex;
  height: 24px;
  border-radius: 3px;
  background: linear-gradient(#f0f0f0, #d9d9d9);
}
.menu {
  height: 22px;
  padding: 0 7px;
  white-space: nowrap;
}
.overflow {
  position: relative;
  width: 12px;
  border-radius: 0 3px 3px 0;
  background: linear-gradient(#ebebeb, #dadada 45%, #a4a4a4);
}
.overflow::before {
  content: '';
  position: absolute;
  right: 3px;
  bottom: 7px;
  width: 5px;
  height: 1px;
  background: #fff;
}
.overflow::after {
  content: '';
  position: absolute;
  right: 2px;
  bottom: 2px;
  border: 3px solid transparent;
  border-top-color: #fff;
  border-bottom: 0;
}

.tabs {
  display: flex;
  align-items: flex-end;
  height: 22px;
}
.tab {
  height: 20px;
  margin-left: -1px;
  padding: 0 5px;
  border: 1px solid #85868c;
  border-bottom: 0;
  background: linear-gradient(#efefef 50%, #dcdcdc 50%, #d0d0d0);
  white-space: nowrap;
}
.tabs .tab {
  min-width: 56px;
}
.tabs .tab.active {
  z-index: 1;
  height: 23px;
  margin: 0 0 -1px;
  padding: 0 9px 0 8px;
  background: #f9fafa;
}
.x {
  margin-left: 2px;
  font-weight: 600;
}

.frame {
  display: flex;
  flex: 1;
  padding: 4px;
  border: 1px solid #8e8f98;
  background: #e6e7ec;
}
.inner {
  display: flex;
  flex: 1;
  min-width: 0;
  background: #e2e2e2;
}
.gutter {
  display: flex;
  flex-direction: column;
  width: 12px;
}
.chev {
  width: 8px;
  height: 8px;
}
.chev svg,
.round svg {
  width: 8px;
  height: 8px;
  fill: none;
  stroke: #555;
  stroke-width: 2;
}
.g-up {
  margin: 1px 0 53px 2px;
}
.g-down {
  margin: auto 0 1px 2px;
}
.center {
  display: flex;
  flex: 1;
  flex-direction: column;
  min-width: 0;
  padding: 2px 0;
}
.barrow {
  display: flex;
  gap: 4px;
  margin: 0 0 2px 6px;
}
.barrow.last {
  margin-bottom: 0;
}
.toolbar {
  display: flex;
  height: 27px;
  border-radius: 3px;
  background: linear-gradient(#efefef, #ececec 45%, #d6d6d6);
}
.grip {
  width: 3px;
  margin: 5px 1px 5px 3px;
  background: repeating-linear-gradient(#c9c9c9 0 2px, #fafafa 2px 4px);
}
.tool {
  display: flex;
  align-items: center;
  justify-content: center;
  width: 24px;
  height: 26px;
  padding-top: 2px;
}
.tool svg {
  width: 16px;
  height: 16px;
  overflow: visible;
}
.sep {
  width: 1px;
  height: 20px;
  margin: 3px 2px;
  background: #bcbcbc;
}
.styles {
  align-items: center;
  width: 369px;
  background: #ebebeb;
}
.styles .grip {
  align-self: stretch;
}
.slabel {
  width: 27px;
  margin-left: 9px;
}
.textlabel {
  width: 25px;
  margin-left: 10px;
}

.combo {
  position: relative;
  display: block;
  height: 22px;
}
.combo select {
  display: block;
  width: 100%;
  height: 22px;
  padding: 1px 0 0 3px;
  border: 1px solid #707070;
  border-radius: 3px;
  appearance: none;
  background: linear-gradient(#f2f2f2, #ebebeb 50%, #dddddd 50%, #cfcfcf);
  box-shadow: inset 0 0 0 1px #f8f8f8;
}
.combo::after {
  content: '';
  position: absolute;
  top: 9px;
  right: 5px;
  border: 4px solid transparent;
  border-top: 4px solid #111;
  border-bottom: 0;
  pointer-events: none;
}
.combo.off {
  width: 118px;
}
.combo.off select {
  border-color: #adb2b5;
  background: #f4f4f4;
  opacity: 1;
}
.combo.off::after {
  border-top-color: #b3b3b3;
}
.check {
  display: flex;
  align-items: center;
  gap: 3px;
  margin-left: 4px;
}
.check input {
  width: 13px;
  height: 13px;
  border: 1px solid #8e8f8f;
  appearance: none;
  background: linear-gradient(135deg, #cdd1d5, #f8f8f8);
  box-shadow: inset 0 0 0 2px #f4f4f4;
}
.check input:checked {
  background: #345;
}
.check.dim {
  gap: 2px;
  color: #838383;
}
.check.dim input {
  border-color: #b5b5b5;
  background: #efefef;
}

.body {
  display: flex;
  flex: 1;
  padding: 1px 0 2px;
}
.navstrip {
  display: flex;
  flex-direction: column;
  align-items: flex-start;
  width: 19px;
}
.round {
  display: flex;
  flex: none;
  align-items: center;
  justify-content: center;
  width: 19px;
  height: 19px;
  border: 1px solid #a5a5a5;
  border-radius: 50%;
  background: #ececee;
}
.navstrip .round {
  margin-bottom: 4px;
}
.vtext {
  writing-mode: vertical-rl;
}
.side {
  display: flex;
  flex-direction: column;
  width: 411px;
  margin-bottom: 2px;
}
.panel {
  display: flex;
  flex: 1;
  padding: 3px 5px 5px 4px;
  border: 1px solid #8e8f98;
  background: #e6e7ec;
}
.content {
  display: flex;
  flex: 1;
  flex-direction: column;
  min-width: 0;
}
.rail {
  display: flex;
  justify-content: center;
  width: 9px;
  margin-left: 7px;
  padding-top: 3px;
  border-radius: 3px;
  background: #e2e2e2;
}
.head {
  display: flex;
  gap: 6px;
  align-items: center;
  padding: 5px 0 5px 2px;
}
.refresh {
  display: flex;
  align-items: center;
  justify-content: center;
  width: 22px;
  height: 22px;
  border: 1px solid #707070;
  border-radius: 3px;
  background: linear-gradient(#f2f2f2 50%, #d8d8d8 50%);
}
.refresh svg {
  width: 16px;
  height: 16px;
}
.refresh.focus {
  border-color: #3c6f95;
  background: #c5dcef;
  box-shadow: inset 0 0 0 1px #45b5e6;
}
.filters {
  display: flex;
  flex-direction: column;
  gap: 4px;
  padding: 0 0 3px 7px;
}
.filter {
  display: flex;
  gap: 4px;
  height: 22px;
}
.flabel {
  width: 67px;
  line-height: 24px;
  white-space: nowrap;
}
.field {
  width: 220px;
  height: 21px;
  padding: 0 3px;
  border: 1px solid #e2e3ea;
  border-top-color: #abadb3;
  background: #fff;
}
.wide {
  width: 220px;
}
.op {
  width: 54px;
}
.tiny {
  width: 35px;
}

.list {
  display: flex;
  flex: 1;
  flex-direction: column;
  min-height: 200px;
  padding: 1px;
  border: 1px solid #7f8188;
  background: #fff;
}
.viewport {
  flex: 1;
  overflow: hidden;
  padding-left: 1px;
}
table {
  width: 100%;
  border-spacing: 0;
  table-layout: fixed;
}
.c-w {
  width: 22px;
}
.c-name {
  width: 240px;
}
.c-use {
  width: 37px;
}
th {
  height: 21px;
  padding: 0;
  border-right: 1px solid #dcdcdc;
  border-bottom: 1px solid #d5d5d5;
  background: linear-gradient(#fff, #f6f6f7);
  font-weight: 400;
  line-height: 18px;
  white-space: nowrap;
}
th:last-child {
  border-right: 0;
}
td {
  height: 25px;
  padding: 2px 0 0;
  overflow: hidden;
  border-bottom: 3px solid transparent;
  background-clip: padding-box;
  color: #0a246a;
  line-height: 20px;
  white-space: nowrap;
}
tbody tr:nth-child(even) td {
  background-color: #f0f7fe;
}
.swatch {
  display: block;
  width: 9px;
  height: 20px;
  margin-left: 7px;
  background: linear-gradient(135deg, #fdf9d0 20%, #fbe98a);
}
.item {
  display: flex;
  align-items: center;
  gap: 5px;
  width: 233px;
  padding-left: 5px;
}
.doc {
  flex: none;
  width: 16px;
  height: 16px;
}
.name {
  overflow: hidden;
  font-weight: 700;
}
.path {
  padding-left: 7px;
}
.scroll {
  display: flex;
  height: 17px;
  background: #ececec;
}
.arrow {
  display: flex;
  align-items: center;
  justify-content: center;
  width: 17px;
}
.arrow svg {
  width: 6px;
  height: 8px;
  fill: #6e6e6e;
}
.track {
  flex: 1;
}
.thumb {
  display: flex;
  align-items: center;
  justify-content: center;
  gap: 1px;
  width: 69%;
  height: 15px;
  margin-top: 1px;
  border: 1px solid #979797;
  border-radius: 2px;
  background: linear-gradient(#f3f3f3 50%, #dadada 50%, #d2d2d2);
}
.thumb i {
  width: 2px;
  height: 7px;
  background: #555;
}

.foot {
  display: flex;
  align-items: flex-start;
  padding-top: 2px;
}
.footmain {
  display: flex;
  flex: 1;
  flex-direction: column;
  gap: 4px;
}
.count {
  margin: 0 0 1px 8px;
  line-height: 14px;
}
.opts {
  display: flex;
  align-items: center;
  gap: 5px;
  height: 22px;
  padding-left: 5px;
  white-space: nowrap;
}
.opts .check {
  margin-left: -1px;
}
.w-list {
  width: 43px;
}
.w-mod {
  width: 73px;
}
.w-group {
  width: 95px;
}
.footmain .round {
  margin-left: 2px;
}
.ptabs {
  display: flex;
  height: 21px;
}
.ptabs .tab {
  min-width: 56px;
  border: 1px solid #85868c;
  border-top: 0;
}
.ptabs .tab.active {
  z-index: 1;
  height: 23px;
  margin: -1px 0 0;
  padding: 0 7px;
  background: #f9fafa;
}
.canvas {
  flex: 1;
  margin: 1px 0 0 6px;
  border: 1px solid #8e8f98;
  background: #e6e7ec;
}
.rgutter {
  width: 9px;
  padding-top: 1px;
}
.status {
  height: 24px;
}

.taskbar {
  display: flex;
  height: 40px;
  border-top: 1px solid #3f4a59;
  background: #a7c0dd;
  box-shadow: inset 0 1px 0 #c3d4e8;
}
.startzone {
  display: flex;
  width: 75px;
  padding-left: 8px;
  background: linear-gradient(90deg, #8293a9 90%, #8c9fb8);
}
.orb {
  width: 38px;
  height: 38px;
}
.orb svg {
  width: 38px;
  height: 38px;
}
.dots {
  width: 9px;
  height: 31px;
  background: radial-gradient(circle at 1px 1px, #4a5768 1px, transparent 2px) 0 0 / 4px 4px;
}
.startzone .dots {
  margin: 4px 0 0 12px;
}
.apps {
  display: flex;
  flex: 1;
  gap: 2px;
}
.app {
  display: flex;
  align-items: center;
  justify-content: center;
  width: 60px;
  height: 39px;
  border: 1px solid transparent;
  border-radius: 3px;
}
.app svg {
  width: 32px;
  height: 32px;
}
.app.open {
  border-color: #4b5c72;
  background: linear-gradient(150deg, #d5e2f1, #a9c1de 60%);
  box-shadow: inset 0 0 0 1px #dde8f5;
}
.app.active {
  background: linear-gradient(150deg, #fff, #d3e0ee);
}
.trayzone {
  display: flex;
  width: 568px;
  padding-left: 28px;
  background: linear-gradient(90deg, #a7c0dd, #8394aa 20px);
  color: #e9eef5;
}
.trayzone .dots {
  margin-top: 4px;
}
.link {
  margin-left: 5px;
  color: #d4dce6;
}
.more {
  width: 9px;
  margin: 0 8px 0 6px;
  color: #fff;
  font-size: 16px;
  font-weight: 700;
}
.lang {
  width: 25px;
  margin-left: 11px;
  line-height: 34px;
}
.tray {
  display: flex;
  align-items: center;
}
.trayicon {
  display: flex;
  justify-content: center;
  width: 24px;
}
.trayicon svg {
  width: 16px;
  height: 16px;
}
.clock {
  display: flex;
  flex: 1;
  flex-direction: column;
  align-items: center;
  padding-top: 3px;
  color: #fff;
  line-height: 17px;
}
.desktop {
  width: 13px;
  border: 1px solid #47515e;
  background: linear-gradient(160deg, #8a939e 40%, #56677b 50%, #7f93aa);
}
</style>
